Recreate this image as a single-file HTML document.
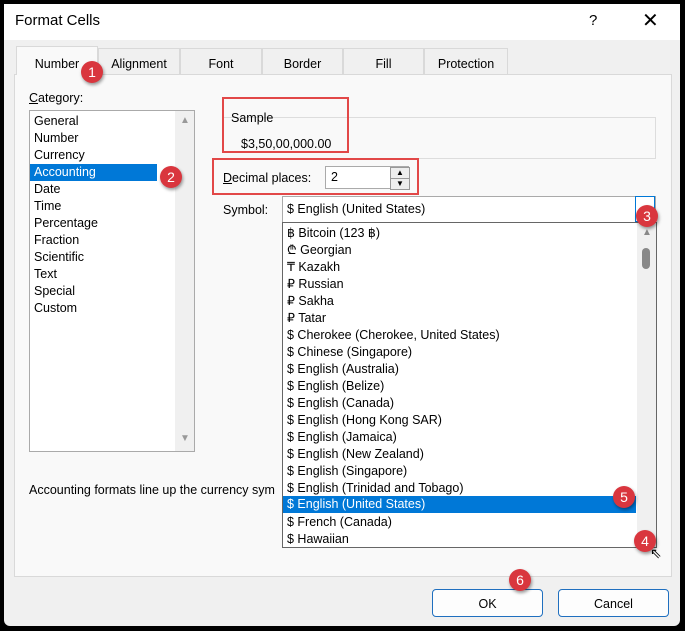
<!DOCTYPE html>
<html><head><style>
body{margin:0;width:685px;height:631px;background:#000;font-family:"Liberation Sans",sans-serif;font-size:12.5px;color:#000;position:relative;overflow:hidden}
.a{position:absolute}
.dlg{left:4px;top:4px;width:676px;height:622px;background:#f0f0f0;border-radius:6px;overflow:hidden}
.title{left:0;top:0;width:676px;height:36px;background:#fff}
.tab{position:absolute;top:48px;height:26px;background:#f0f0f0;border:1px solid #d9d9d9;border-bottom:none;text-align:center;line-height:30px;box-sizing:border-box}
.panel{left:14px;top:74px;width:658px;height:503px;background:#f9f9f9;border:1px solid #d9d9d9;box-sizing:border-box}
.it{position:absolute;left:4px;height:17px;line-height:17px;white-space:nowrap}
.badge{position:absolute;z-index:5;width:22px;height:22px;border-radius:50%;background:#d9363e;color:#fff;font-size:14px;text-align:center;line-height:22px;box-shadow:1px 2px 3px rgba(0,0,0,.4)}
.red{position:absolute;border:2px solid #e24848}
.btn{position:absolute;top:589px;height:28px;border:1px solid #1f6fbf;border-radius:4px;background:#fdfdfd;text-align:center;line-height:28px;box-sizing:border-box}
</style></head><body>
<div class="a dlg"></div>
<div class="a title" style="left:4px;top:4px;width:676px"></div>
<div class="a" style="left:15px;top:12px;font-size:15px">Format Cells</div>
<div class="a" style="left:589px;top:12px;font-size:15px">?</div>
<div class="a" style="left:642px;top:8px;font-size:20px">✕</div>
<div class="a panel"></div>
<div class="tab" style="left:16px;width:82px;top:46px;height:29px;background:#f9f9f9;z-index:2;line-height:34px">Number</div>
<div class="tab" style="left:98px;width:82px">Alignment</div>
<div class="tab" style="left:180px;width:82px">Font</div>
<div class="tab" style="left:262px;width:81px">Border</div>
<div class="tab" style="left:343px;width:81px">Fill</div>
<div class="tab" style="left:424px;width:84px">Protection</div>
<div class="a" style="left:29px;top:91px"><u>C</u>ategory:</div>
<div class="a" style="left:29px;top:110px;width:166px;height:342px;background:#fff;border:1px solid #aaa;box-sizing:border-box">
<div class="it" style="top:2px">General</div><div class="it" style="top:19px">Number</div><div class="it" style="top:36px">Currency</div>
<div class="it" style="top:53px;left:0;width:127px;background:#0078d7;color:#fff;padding-left:4px;box-sizing:border-box">Accounting</div>
<div class="it" style="top:70px">Date</div><div class="it" style="top:87px">Time</div><div class="it" style="top:104px">Percentage</div><div class="it" style="top:121px">Fraction</div><div class="it" style="top:138px">Scientific</div><div class="it" style="top:155px">Text</div><div class="it" style="top:172px">Special</div><div class="it" style="top:189px">Custom</div>
<div class="a" style="left:145px;top:0;width:19px;height:340px;background:#f0f0f0"></div>
<div class="a" style="left:150px;top:4px;color:#999;font-size:10px">▲</div>
<div class="a" style="left:150px;top:322px;color:#999;font-size:10px">▼</div>
</div>
<div class="a" style="left:224px;top:117px;width:431px;height:40px;border:1px solid #ddd;border-left:none"></div>
<div class="a" style="left:231px;top:111px">Sample</div>
<div class="a" style="left:241px;top:137px">$3,50,00,000.00</div>
<div class="red" style="left:222px;top:97px;width:123px;height:52px"></div>
<div class="a" style="left:223px;top:171px"><u>D</u>ecimal places:</div>
<div class="a" style="left:325px;top:166px;width:84px;height:23px;background:#fff;border:1px solid #aaa;box-sizing:border-box;padding-left:5px;line-height:21px">2</div>
<div class="a" style="left:390px;top:167px;width:18px;height:10px;border:1px solid #999;background:#eee;font-size:8px;text-align:center;line-height:10px">▲</div>
<div class="a" style="left:390px;top:178px;width:18px;height:10px;border:1px solid #999;background:#eee;font-size:8px;text-align:center;line-height:10px">▼</div>
<div class="red" style="left:212px;top:158px;width:203px;height:33px"></div>
<div class="a" style="left:223px;top:203px">Symbol:</div>
<div class="a" style="left:282px;top:196px;width:374px;height:27px;background:#fff;border:1px solid #aaa;box-sizing:border-box;padding:5px 0 0 4px">$ English (United States)</div>
<div class="a" style="left:635px;top:196px;width:20px;height:26px;border:1px solid #0078d7;box-sizing:border-box"></div>
<div class="a" style="left:282px;top:222px;width:375px;height:326px;background:#fff;border:1px solid #666;box-sizing:border-box">
<div class="it" style="top:2px">฿ Bitcoin (123 ฿)</div><div class="it" style="top:19px">₾ Georgian</div><div class="it" style="top:36px">₸ Kazakh</div><div class="it" style="top:53px">₽ Russian</div><div class="it" style="top:70px">₽ Sakha</div><div class="it" style="top:87px">₽ Tatar</div><div class="it" style="top:104px">$ Cherokee (Cherokee, United States)</div><div class="it" style="top:121px">$ Chinese (Singapore)</div><div class="it" style="top:138px">$ English (Australia)</div><div class="it" style="top:155px">$ English (Belize)</div><div class="it" style="top:172px">$ English (Canada)</div><div class="it" style="top:189px">$ English (Hong Kong SAR)</div><div class="it" style="top:206px">$ English (Jamaica)</div><div class="it" style="top:223px">$ English (New Zealand)</div><div class="it" style="top:240px">$ English (Singapore)</div><div class="it" style="top:257px">$ English (Trinidad and Tobago)</div>
<div class="it" style="top:273px;left:0;width:353px;background:#0078d7;color:#fff;padding-left:4px;box-sizing:border-box">$ English (United States)</div>
<div class="it" style="top:291px">$ French (Canada)</div><div class="it" style="top:308px">$ Hawaiian</div>
<div class="a" style="left:354px;top:0;width:19px;height:324px;background:#f0f0f0"></div>
<div class="a" style="left:359px;top:4px;color:#888;font-size:10px">▲</div>
<div class="a" style="left:359px;top:25px;width:8px;height:21px;background:#888;border-radius:4px"></div>
</div>
<div class="a" style="left:29px;top:483px">Accounting formats line up the currency sym</div>
<div class="btn" style="left:432px;width:111px">OK</div>
<div class="btn" style="left:558px;width:111px">Cancel</div>
<div class="a" style="left:650px;top:545px;font-size:14px">⇖</div>
<div class="badge" style="left:81px;top:61px">1</div>
<div class="badge" style="left:160px;top:166px">2</div>
<div class="badge" style="left:636px;top:205px">3</div>
<div class="badge" style="left:634px;top:530px">4</div>
<div class="badge" style="left:613px;top:486px">5</div>
<div class="badge" style="left:509px;top:569px">6</div>
</body></html>
